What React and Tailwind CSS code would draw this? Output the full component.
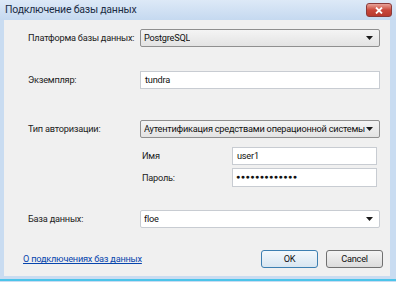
import React from 'react';

function Arrow() {
  return (
    <svg width="7" height="4" viewBox="0 0 7 4" className="shrink-0">
      <path d="M0 0h7L3.5 4z" fill="#1a1a1a" />
    </svg>
  );
}

function Select({ value, gray = true }) {
  return (
    <div
      className={`flex-1 min-w-0 h-[18px] flex items-center justify-between pl-[3px] pr-[6px] border rounded-[2px] ${
        gray
          ? 'border-[#8f8f8f] bg-gradient-to-b from-[#f4f4f4] to-[#e3e3e3]'
          : 'border-[#c8ccd2] bg-white'
      }`}
    >
      <span className="text-[#111] whitespace-nowrap overflow-hidden">{value}</span>
      <Arrow />
    </div>
  );
}

function Input({ value, className = '' }) {
  return (
    <div className={`h-[18px] flex items-center pl-[4px] border border-[#c8ccd2] bg-white ${className}`}>
      <span className="text-[#111]">{value}</span>
    </div>
  );
}

function Row({ label, children, className = '' }) {
  return (
    <div className={`flex items-center h-[18px] ${className}`}>
      <div className="w-[112px] shrink-0 text-[#222] whitespace-nowrap">{label}</div>
      {children}
    </div>
  );
}

export default function App() {
  return (
    <div
      className="w-[396px] h-[282px] bg-[#c9dcf1] flex flex-col overflow-hidden text-[9.2px] tracking-[-0.22px] leading-none"
      style={{ fontFamily: 'Roboto, "Liberation Sans", sans-serif' }}
    >
      {/* Title bar */}
      <div className="h-[20px] shrink-0 flex items-center justify-between pl-[5px] pr-[4px] bg-gradient-to-b from-[#dde9f7] to-[#c5d9f0]">
        <span className="text-[10.5px] text-[#1b2d45]">Подключение базы данных</span>
        <div className="w-[26px] h-[14px] rounded-[3px] border border-[#8a3a3a] bg-gradient-to-b from-[#e8a39a] via-[#c9483c] to-[#b83a2e] flex items-center justify-center">
          <svg width="8" height="7" viewBox="0 0 8 7">
            <path d="M1 0.5l6 6M7 0.5l-6 6" stroke="#fff" strokeWidth="1.8" />
          </svg>
        </div>
      </div>

      {/* Client area */}
      <div className="h-[256px] shrink-0 ml-[4px] mr-[6px] bg-[#f0f0f0] pt-[9px] pl-[24px] pr-[10px] flex flex-col">
        <Row label="Платформа базы данных:">
          <Select value="PostgreSQL" />
        </Row>

        <Row label="Экземпляр:" className="mt-[24px]">
          <Input value="tundra" className="flex-1" />
        </Row>

        <Row label="Тип авторизации:" className="mt-[31px]">
          <Select value="Аутентификация средствами операционной системы" />
        </Row>

        <div className="ml-[114px] mt-[9px] h-[18px] flex items-center">
          <div className="w-[90px] text-[#222]">Имя</div>
          <Input value="user1" className="w-[145px]" />
        </div>
        <div className="ml-[114px] mt-[3px] h-[19px] flex items-center">
          <div className="w-[90px] text-[#222]">Пароль:</div>
          <div className="w-[145px] h-[19px] flex items-center pl-[3px] border border-[#c8ccd2] bg-white">
            <span className="text-[7px] tracking-[0.5px] text-[#111]">●●●●●●●●●●●●●</span>
          </div>
        </div>

        <Row label="База данных:" className="mt-[23px]">
          <Select value="floe" gray={false} />
        </Row>

        <div className="mt-[22px] h-[18px] -ml-[5px] -mr-[3px] flex items-center justify-between">
          <a className="text-[#0645ad] underline">О подключениях баз данных</a>
          <div className="flex gap-[8px]">
            <button className="w-[57px] h-[18px] rounded-[3px] border border-[#3c7fb1] bg-gradient-to-b from-[#f2f8fc] to-[#d8e6f1] text-[#111] leading-none">
              OK
            </button>
            <button className="w-[57px] h-[18px] rounded-[3px] border border-[#707070] bg-gradient-to-b from-[#f4f4f4] to-[#dcdcdc] text-[#111] leading-none">
              Cancel
            </button>
          </div>
        </div>
      </div>

      {/* Bottom frame */}
      <div className="h-[6px] shrink-0 flex flex-col">
        <div className="h-[3px] bg-[#c9dcf1]" />
        <div className="h-[2px] bg-[#4cc4ea]" />
      </div>
    </div>
  );
}
